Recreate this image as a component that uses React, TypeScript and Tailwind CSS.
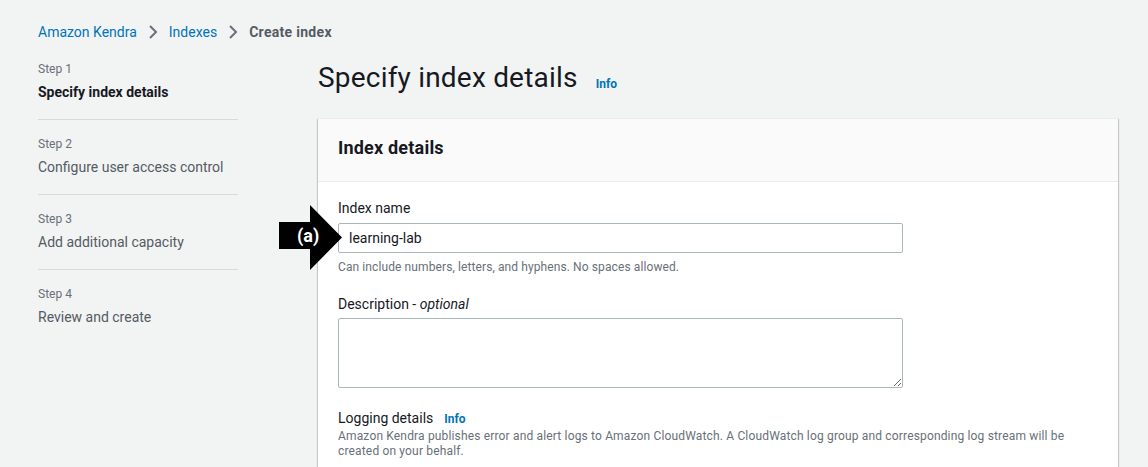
import React from "react";

const steps = [
  { label: "Step 1", title: "Specify index details", active: true },
  { label: "Step 2", title: "Configure user access control", active: false },
  { label: "Step 3", title: "Add additional capacity", active: false },
  { label: "Step 4", title: "Review and create", active: false },
];

function Chevron() {
  return (
    <svg width="10" height="16" viewBox="0 0 10 16" className="mx-[11px]" aria-hidden>
      <path d="M2 2l6 6-6 6" fill="none" stroke="#687078" strokeWidth="2" />
    </svg>
  );
}

export default function App() {
  return (
    <div
      className="relative h-[467px] w-full overflow-hidden bg-[#f2f3f3] pl-[38px] pr-[30px] pt-[22px] text-[#16191f]"
      style={{ fontFamily: "Roboto, 'Liberation Sans', sans-serif" }}
    >
      {/* Breadcrumbs */}
      <nav className="flex h-5 items-center text-[14px] leading-5">
        <span className="text-[#0073bb]">Amazon Kendra</span>
        <Chevron />
        <span className="text-[#0073bb]">Indexes</span>
        <Chevron />
        <span className="font-bold tracking-[0.3px] text-[#545b64]">Create index</span>
      </nav>

      <div className="mt-[19px] flex">
        {/* Left: wizard steps */}
        <ol className="w-[200px] shrink-0">
          {steps.map((s, i) => (
            <li
              key={s.label}
              className={`${i < steps.length - 1 ? "border-b border-[#d5dbdb] pb-[17px]" : ""} ${
                i > 0 ? "pt-[16px]" : ""
              }`}
            >
              <div className="text-[12px] leading-4 text-[#687078]">{s.label}</div>
              <div
                className={`mt-[5px] text-[14px] leading-5 ${
                  s.active ? "font-bold text-[#16191f]" : "text-[#545b64]"
                }`}
              >
                {s.title}
              </div>
            </li>
          ))}
        </ol>

        {/* Right: form */}
        <main className="ml-[80px] w-[800px] shrink-0 -mt-px">
          <div className="flex h-9 items-center">
            <h1 className="text-[28px] font-normal leading-9 tracking-[0.2px] text-[#16191f]">
              Specify index details
            </h1>
            <span className="ml-[18px] mt-[12px] text-[12px] font-bold text-[#0073bb]">Info</span>
          </div>

          <section className="relative mt-[22px] border-t border-[#eaeded] bg-white shadow-[0_1px_1px_0_rgba(0,28,36,0.3),1px_1px_1px_0_rgba(0,28,36,0.15),-1px_1px_1px_0_rgba(0,28,36,0.15)]">
            <header className="flex h-[63px] items-center border-b border-[#eaeded] bg-[#fafafa] px-5 pb-1">
              <h2 className="text-[18px] font-bold leading-[22px] tracking-[0.2px]">Index details</h2>
            </header>

            <div className="px-5 pb-6 pt-[16px]">
              <label className="block text-[14px] leading-5">Index name</label>
              <input
                readOnly
                value="learning-lab"
                className="mt-[5px] h-[30px] w-[565px] rounded-[2px] border border-[#aab7b8] px-[10px] text-[14px] text-[#16191f] outline-none"
              />
              <p className="mt-[6px] text-[12px] leading-4 tracking-[0.1px] text-[#687078]">
                Can include numbers, letters, and hyphens. No spaces allowed.
              </p>

              <label className="mt-[19px] block text-[14px] leading-5">
                Description - <i>optional</i>
              </label>
              <textarea
                readOnly
                className="mt-[4px] block h-[70px] w-[565px] rounded-[2px] border border-[#aab7b8] px-[10px] py-1 text-[14px] outline-none"
              />

              <div className="mt-[20px] flex items-baseline text-[14px] leading-5">
                <span>Logging details</span>
                <span className="ml-[11px] text-[12px] font-bold text-[#0073bb]">Info</span>
              </div>
              <p className="text-[12px] leading-[15px] tracking-[0.16px] text-[#687078]">
                Amazon Kendra publishes error and alert logs to Amazon CloudWatch. A CloudWatch log group and
                corresponding log stream will be created on your behalf.
              </p>
            </div>

            {/* Annotation arrow (a) */}
            <div className="absolute left-[-39px] top-[86px] h-[65px] w-[64px]">
              <svg width="64" height="65" viewBox="0 0 64 65" className="block" aria-hidden>
                <polygon points="0,17 31,17 31,0 63,32.5 31,65 31,44 0,44" fill="#000" />
              </svg>
              <span className="absolute left-[18px] top-[21px] text-[18px] font-bold leading-5 text-white">
                (a)
              </span>
            </div>
          </section>
        </main>
      </div>
    </div>
  );
}
